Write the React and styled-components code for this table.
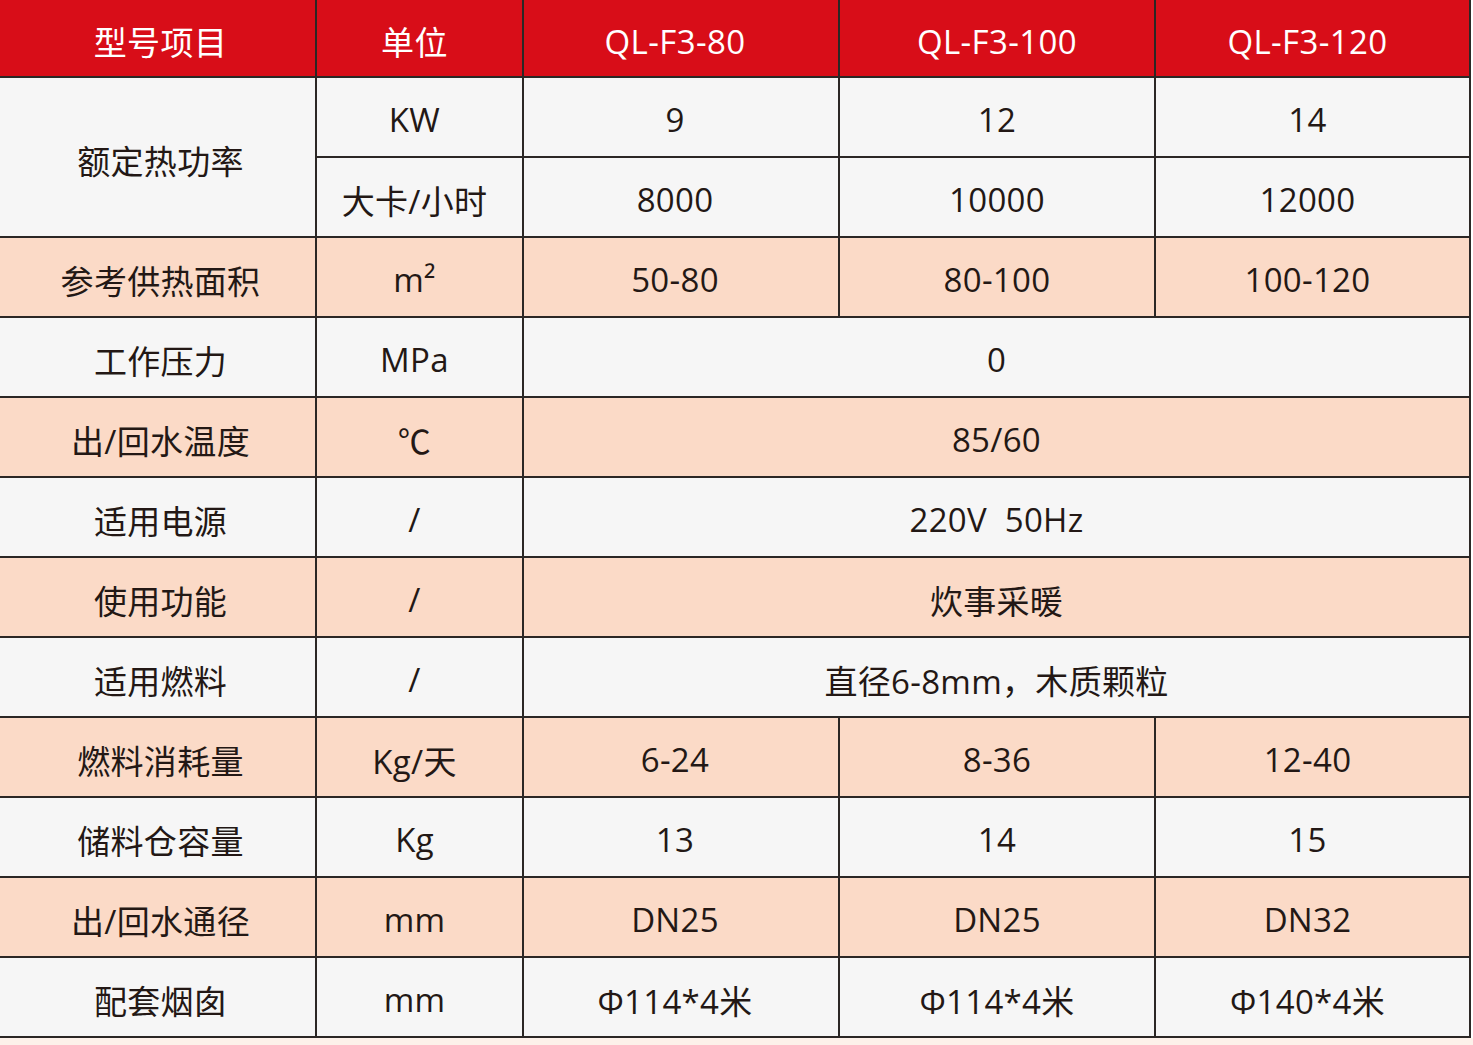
import styled, { createGlobalStyle } from "styled-components";

const GlobalStyle = createGlobalStyle`
  body {
    margin: 0;
    background: #ffffff;
    font-family: "Open Sans", "Noto Sans CJK SC", sans-serif;
  }
`;

// text in the original sits a few px off centre in some columns
const shifts = [6, -10, -12, 0, -10];

const pad = (p) => {
  const s = shifts[p.$col] || 0;
  return s > 0 ? `padding-left: ${s}px;` : s < 0 ? `padding-right: ${-s}px;` : "";
};

const Page = styled.div`
  width: 1473px;
  height: 1045px;
  background: linear-gradient(to bottom, #ffffff 1038px, #fdf1ea 1038px);
`;

const Grid = styled.div`
  display: grid;
  grid-template-columns: 315px 205px 314px 314px 313px;
  grid-template-rows: 76px repeat(12, 78px);
  gap: 2px;
  width: 1469px;
  padding: 0 2px 2px 0;
  background: #2b2725;
`;

const Head = styled.div`
  display: flex;
  align-items: center;
  justify-content: center;
  background: #d80d18;
  color: #ffffff;
  font-size: 33px;
  letter-spacing: 0.4px;
  padding-top: 6px;
  ${pad}
`;

const Cell = styled.div`
  display: flex;
  align-items: center;
  justify-content: center;
  background: ${(p) => (p.$pink ? "#fbdac7" : "#f6f6f6")};
  color: #231815;
  font-size: 33px;
  letter-spacing: 0.3px;
  white-space: pre;
  grid-row: ${(p) => (p.$rows ? `span ${p.$rows}` : "auto")};
  grid-column: ${(p) => (p.$cols ? `span ${p.$cols}` : "auto")};
  padding-top: 5px;
  ${pad}
`;

const heads = ["型号项目", "单位", "QL-F3-80", "QL-F3-100", "QL-F3-120"];

const rows = [
  { label: "参考供热面积", unit: "m²", vals: ["50-80", "80-100", "100-120"], pink: true },
  { label: "工作压力", unit: "MPa", vals: ["0"] },
  { label: "出/回水温度", unit: "℃", vals: ["85/60"], pink: true },
  { label: "适用电源", unit: "/", vals: ["220V  50Hz"] },
  { label: "使用功能", unit: "/", vals: ["炊事采暖"], pink: true },
  { label: "适用燃料", unit: "/", vals: ["直径6-8mm，木质颗粒"] },
  { label: "燃料消耗量", unit: "Kg/天", vals: ["6-24", "8-36", "12-40"], pink: true },
  { label: "储料仓容量", unit: "Kg", vals: ["13", "14", "15"] },
  { label: "出/回水通径", unit: "mm", vals: ["DN25", "DN25", "DN32"], pink: true },
  { label: "配套烟囱", unit: "mm", vals: ["Φ114*4米", "Φ114*4米", "Φ140*4米"] },
];

export default function App() {
  return (
    <Page>
      <GlobalStyle />
      <Grid>
        {heads.map((h, i) => (
          <Head key={h} $col={i}>{h}</Head>
        ))}

        <Cell $rows={2} $col={0}>额定热功率</Cell>
        <Cell $col={1}>KW</Cell>
        <Cell $col={2}>9</Cell>
        <Cell $col={3}>12</Cell>
        <Cell $col={4}>14</Cell>
        <Cell $col={1}>大卡/小时</Cell>
        <Cell $col={2}>8000</Cell>
        <Cell $col={3}>10000</Cell>
        <Cell $col={4}>12000</Cell>

        {rows.map((r) => (
          <>
            <Cell key={r.label} $pink={r.pink} $col={0}>{r.label}</Cell>
            <Cell $pink={r.pink} $col={1}>{r.unit}</Cell>
            {r.vals.length === 1 ? (
              <Cell $pink={r.pink} $cols={3}>{r.vals[0]}</Cell>
            ) : (
              r.vals.map((v, i) => (
                <Cell key={i} $pink={r.pink} $col={i + 2}>{v}</Cell>
              ))
            )}
          </>
        ))}
      </Grid>
    </Page>
  );
}
